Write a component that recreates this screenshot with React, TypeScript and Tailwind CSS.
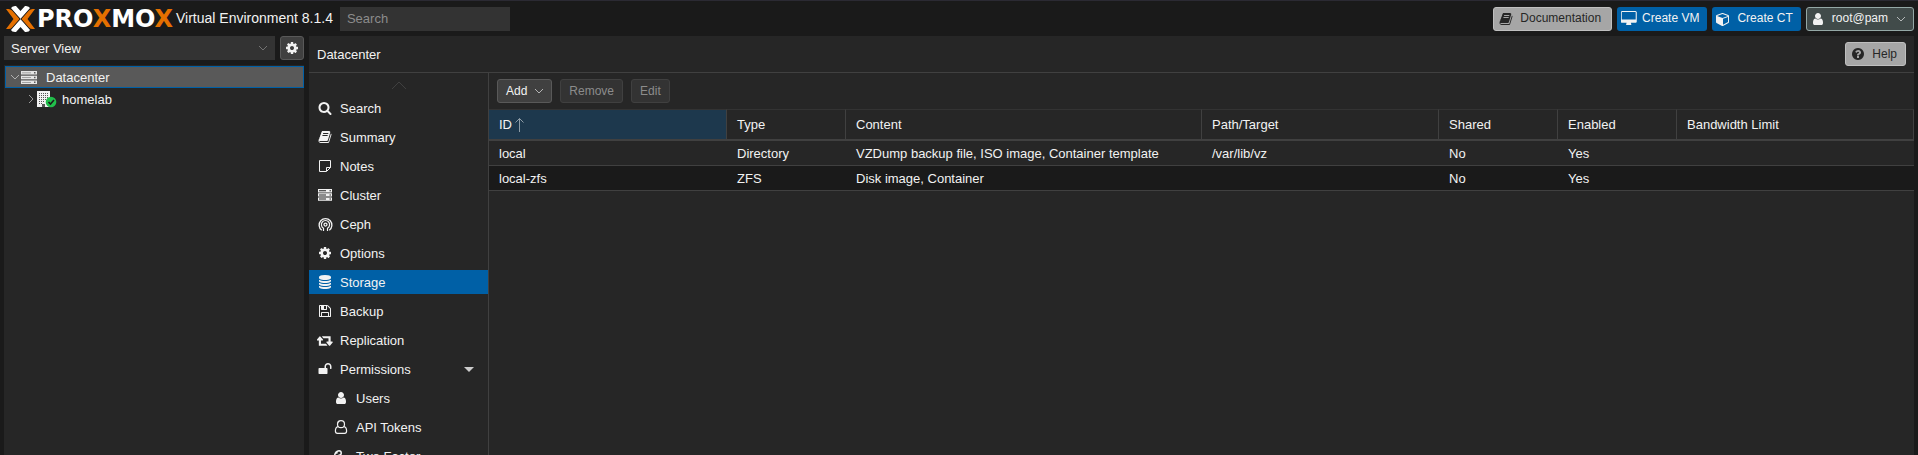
import type { ReactNode } from 'react'

const paths = {
  search:
    'M1216 832q0-185-131.5-316.5t-316.5-131.5-316.5 131.5-131.5 316.5 131.5 316.5 316.5 131.5 316.5-131.5 131.5-316.5zm512 832q0 52-38 90t-90 38q-54 0-90-38l-343-342q-179 124-399 124-143 0-273.5-55.5t-225-150-150-225-55.5-273.5 55.5-273.5 150-225 225-150 273.5-55.5 273.5 55.5 225 150 150 225 55.5 273.5q0 220-124 399l343 343q37 37 37 90z',
  book: 'M1703 478q40 57 18 129l-275 906q-19 64-76.5 107.5t-122.5 43.5h-923q-77 0-148.5-53.5t-99.5-131.5q-24-67-2-127 0-4 3-27t4-37q1-8-3-21.5t-3-19.5q2-11 8-21t16.5-23.5 16.5-23.5q23-38 45-91.5t30-91.5q3-10 .5-30t-.5-28q3-11 17-28t17-23q21-36 42-92t25-90q1-9-2.5-32t.5-28q4-13 22-30.5t22-22.5q19-26 42.5-84.5t27.5-96.5q1-8-3-25.5t-2-26.5q2-8 9-18t18-23 17-21q8-12 16.5-30.5t15-35 16-36 19.5-32 26.5-23.5 36-11.5 47.5 5.5l-1 3q38-9 51-9h761q74 0 114 56t18 130l-274 906q-36 119-71.5 153.5t-128.5 34.5h-869q-27 0-38 15-11 16-1 43 24 70 144 70h923q29 0 56-15.5t35-41.5l300-987q7-22 5-57 38 15 59 43zm-1064 2q-4 13 2 22.5t20 9.5h608q13 0 25.5-9.5t16.5-22.5l21-64q4-13-2-22.5t-20-9.5h-608q-13 0-25.5 9.5t-16.5 22.5zm-83 256q-4 13 2 22.5t20 9.5h608q13 0 25.5-9.5t16.5-22.5l21-64q4-13-2-22.5t-20-9.5h-608q-13 0-25.5 9.5t-16.5 22.5z',
  cog: 'M1152 896q0-106-75-181t-181-75-181 75-75 181 75 181 181 75 181-75 75-181zm512-109v222q0 12-8 23t-20 13l-185 28q-19 54-39 91 35 50 107 138 10 12 10 25t-9 23q-27 37-99 108t-94 71q-12 0-26-9l-138-108q-44 23-91 38-16 136-29 186-7 28-36 28h-222q-14 0-24.5-8.5t-11.5-21.5l-28-184q-49-16-90-37l-141 107q-10 9-25 9-14 0-25-11-126-114-165-168-7-10-7-23 0-12 8-23 15-21 51-66.5t54-70.5q-27-50-41-99l-183-27q-13-2-21-12.5t-8-23.5v-222q0-12 8-23t19-13l186-28q14-46 39-92-40-57-107-138-10-12-10-24 0-10 9-23 26-36 98.5-107.5t94.5-71.5q13 0 26 10l138 107q44-23 91-38 16-136 29-186 7-28 36-28h222q14 0 24.5 8.5t11.5 21.5l28 184q49 16 90 37l142-107q9-9 24-9 13 0 25 10 129 119 165 170 7 8 7 22 0 12-8 23-15 21-51 66.5t-54 70.5q26 50 41 98l183 28q13 2 21 12.5t8 23.5z',
  database:
    'M896 768q237 0 443-43t325-127v170q0 69-103 128t-280 93.5-385 34.5-385-34.5-280-93.5-103-128v-170q119 84 325 127t443 43zm0 768q237 0 443-43t325-127v170q0 69-103 128t-280 93.5-385 34.5-385-34.5-280-93.5-103-128v-170q119 84 325 127t443 43zm0-384q237 0 443-43t325-127v170q0 69-103 128t-280 93.5-385 34.5-385-34.5-280-93.5-103-128v-170q119 84 325 127t443 43zm0-1152q208 0 385 34.5t280 93.5 103 128v128q0 69-103 128t-280 93.5-385 34.5-385-34.5-280-93.5-103-128v-128q0-69 103-128t280-93.5 385-34.5z',
  save: 'M512 1536h768v-384h-768v384zm896 0h128v-896q0-14-10-38.5t-20-34.5l-281-281q-10-10-34-20t-39-10v416q0 40-28 68t-68 28h-576q-40 0-68-28t-28-68v-416h-128v1280h128v-416q0-40 28-68t68-28h832q40 0 68 28t28 68v416zm-384-928v-320q0-13-9.5-22.5t-22.5-9.5h-192q-13 0-22.5 9.5t-9.5 22.5v320q0 13 9.5 22.5t22.5 9.5h192q13 0 22.5-9.5t9.5-22.5zm640 32v928q0 40-28 68t-68 28h-1344q-40 0-68-28t-28-68v-1344q0-40 28-68t68-28h928q40 0 88 20t76 48l280 280q28 28 48 76t20 88z',
  retweet:
    'M1216 1504q0 13-9.5 22.5t-22.5 9.5h-960q-8 0-13.5-2t-9-7-5.5-8-3-11.5-1-11.5v-600h-192q-26 0-45-19t-19-45q0-24 15-41l320-384q19-22 49-22t49 22l320 384q15 17 15 41 0 26-19 45t-45 19h-192v384h576q16 0 25 11l160 192q7 10 7 21zm640-416q0 24-15 41l-320 384q-20 23-49 23t-49-23l-320-384q-15-17-15-41 0-26 19-45t45-19h192v-384h-576q-16 0-25-12l-160-192q-7-9-7-20 0-13 9.5-22.5t22.5-9.5h960q8 0 13.5 2t9 7 5.5 8 3 11.5 1 11.5v600h192q26 0 45 19t19 45z',
  unlock:
    'M1728 576v256q0 26-19 45t-45 19h-64q-26 0-45-19t-19-45v-256q0-106-75-181t-181-75-181 75-75 181v192h96q40 0 68 28t28 68v576q0 40-28 68t-68 28h-960q-40 0-68-28t-28-68v-576q0-40 28-68t68-28h672v-192q0-185 131.5-316.5t316.5-131.5 316.5 131.5 131.5 316.5z',
  user: 'M1536 1399q0 109-62.5 187t-150.5 78h-854q-88 0-150.5-78t-62.5-187q0-85 8.5-160.5t31.5-152 58.5-131 94-89 134.5-34.5q131 128 313 128t313-128q76 0 134.5 34.5t94 89 58.5 131 31.5 152 8.5 160.5zm-256-887q0 159-112.5 271.5t-271.5 112.5-271.5-112.5-112.5-271.5 112.5-271.5 271.5-112.5 271.5 112.5 112.5 271.5z',
  key: 'M832 512q0-80-56-136t-136-56-136 56-56 136q0 42 19 83-41-19-83-19-80 0-136 56t-56 136 56 136 136 56 136-56 56-136q0-42-19-83 41 19 83 19 80 0 136-56t56-136zm851 704q0 17-49 66t-66 49q-9 0-28.5-16t-36.5-33-38.5-40-24.5-26l-96 96 220 220q28 28 28 68 0 42-39 81t-81 39q-40 0-68-28l-671-671q-176 131-365 131-163 0-265.5-102.5t-102.5-265.5q0-160 95-313t248-248 313-95q163 0 265.5 102.5t102.5 265.5q0 189-131 365l355 355 96-96q-3-3-26-24.5t-40-38.5-33-36.5-16-28.5q0-17 49-66t66-49q13 0 23 10 6 6 46 44.5t82 79.5 86.5 86 73 78 28.5 41z',
  desktop:
    'M1728 992v-832q0-13-9.5-22.5t-22.5-9.5h-1600q-13 0-22.5 9.5t-9.5 22.5v832q0 13 9.5 22.5t22.5 9.5h1600q13 0 22.5-9.5t9.5-22.5zm128-832v1088q0 66-47 113t-113 47h-544q0 37 16 77.5t32 71 16 43.5q0 26-19 45t-45 19h-512q-26 0-45-19t-19-45q0-14 16-44t32-70 16-78h-544q-66 0-113-47t-47-113v-1088q0-66 47-113t113-47h1600q66 0 113 47t47 113z',
  cube: 'M896 1629l640-349v-636l-640 233v752zm-64-865l698-254-698-254-698 254zm832-252v768q0 35-18 65t-49 47l-704 384q-28 16-61 16t-61-16l-704-384q-31-17-49-47t-18-65v-768q0-40 23-73t61-47l704-256q22-8 44-8t44 8l704 256q38 14 61 47t23 73z',
  question:
    'M1024 1376v-192q0-14-9-23t-23-9h-192q-14 0-23 9t-9 23v192q0 14 9 23t23 9h192q14 0 23-9t9-23zm256-672q0-88-55.5-163t-138.5-116-170-41q-243 0-371 213-15 24 8 42l132 100q7 6 19 6 16 0 25-12 53-68 86-92 34-24 86-24 48 0 85.5 26t37.5 59q0 38-20 61t-68 45q-63 28-115.5 86.5t-52.5 125.5v36q0 14 9 23t23 9h192q14 0 23-9t9-23q0-19 21.5-49.5t54.5-49.5q32-18 49-28.5t46-35 44.5-48 28-60.5 12.5-81zm384 192q0 209-103 385.5t-279.5 279.5-385.5 103-385.5-103-279.5-279.5-103-385.5 103-385.5 279.5-279.5 385.5-103 385.5 103 279.5 279.5 103 385.5z',
}

const Icon = ({ name, wide = false }: { name: keyof typeof paths; wide?: boolean }) => (
  <svg
    className={wide ? 'h-[15px] w-4 shrink-0' : 'size-[14px] shrink-0'}
    viewBox={wide ? '0 0 1856 1792' : '0 0 1792 1792'}
    fill="currentColor"
    fillRule="evenodd"
  >
    <path d={paths[name]} />
  </svg>
)

const ServerIcon = () => (
  <svg className="h-3 w-[14px] shrink-0" viewBox="0 0 14 12" fill="currentColor">
    <path
      fillRule="evenodd"
      d="M0 0h14v3.400H0zM0 4.200h14v3.400H0zM0 8.400h14v3.400H0zM1 1.200h7v1H1zM11.500 1.200h1.500v1h-1.500zM1 5.400h7v1H1zM11.500 5.400h1.500v1h-1.500zM1 9.600h7v1H1zM11.500 9.600h1.500v1h-1.500z"
    />
  </svg>
)

const DatacenterIcon = () => (
  <svg className="h-[13px] w-4 shrink-0" viewBox="0 0 16 13" fill="#e6e6e6">
    <path d="M0 0h16v3.500H0zM0 4.700h16v3.500H0zM0 9.500h16V13H0z" />
    <path fill="#8c8c8c" d="M1 1.500h9v.8H1zM1 6.200h9V7H1zM1 11h9v.8H1z" />
    <path fill="#595959" d="M13 1h1.500v1.500H13zM13 5.700h1.500v1.500H13zM13 10.500h1.500V12H13z" />
  </svg>
)

const NodeIcon = () => (
  <svg className="h-[18px] w-5 shrink-0" viewBox="0 0 20 18">
    <path fill="#f2f2f2" d="M0 1h13v16H0z" />
    <path
      stroke="#555"
      strokeDasharray="1 1"
      d="M2 3.500h9M2 5.500h9M2 7.500h9M2 9.500h9M2 11.500h5M2 13.500h3"
    />
    <path fill="#555" d="M5 14h3v3H5z" />
    <circle cx="14" cy="12" r="5.300" fill="#21bf4b" />
    <path fill="none" stroke="#1c1c1c" strokeWidth="1.600" d="M11.500 12l2 2 3.500-4" />
  </svg>
)

const NoteIcon = () => (
  <svg className="size-[14px]" viewBox="0 0 14 14" fill="none" stroke="currentColor">
    <path d="M1.5 1.5h11v7l-4 4h-7zM8.500 12V8.500h4" />
  </svg>
)

const CephIcon = () => (
  <svg className="size-[15px]" viewBox="0 0 15 15" fill="none" stroke="currentColor">
    <path strokeWidth="1.300" d="M3.700 13.200a6.400 6.400 0 1 1 7.600 0" />
    <path strokeWidth="1.200" d="M5.500 14v-2.800a4.100 4.100 0 1 1 4 0V14" />
    <circle cx="7.500" cy="7.600" r="1.500" strokeWidth="1.300" />
  </svg>
)

const UserOutlineIcon = () => (
  <svg className="size-[14px]" viewBox="0 0 14 14" fill="none" stroke="currentColor" strokeWidth="1.200">
    <path d="M4.200 6.700C2.100 7 1.400 9 1.400 11c0 1.400.9 2.400 2 2.400h7.200c1.100 0 2-1 2-2.400 0-2-.7-4-2.800-4.300" />
    <circle cx="7" cy="4.200" r="3.500" />
  </svg>
)

const Chevron = ({ className = '' }: { className?: string }) => (
  <svg className={`h-2 w-3 shrink-0 ${className}`} viewBox="0 0 12 8" fill="none" stroke="currentColor">
    <path d="M2 2l4 4 4-4" />
  </svg>
)

const Logo = () => (
  <div className="flex w-[168px] shrink-0 items-center gap-[2px]">
    <svg className="h-[26px] w-[29px] shrink-0" viewBox="0 0 29 26">
      <path fill="#fff" d="M4.500 2.500Q6 0 9 0h1l4.500 5L19 0h1q3 0 4.500 2.500L14.500 13z" />
      <path fill="#fff" d="M4.500 23.500Q6 26 9 26h1l4.500-5 4.500 5h1q3 0 4.500-2.500L14.500 13z" />
      <path fill="#1a1a1a" d="M2 2h3l9.500 11L5 24H2zM27 2h-3l-9.500 11L24 24h3z" />
      <path
        fill="#e57000"
        d="M0 3h2.500q2 0 3.500 1.500L13.500 13 6 21.500Q4.500 23 2.500 23H0l7.500-10zM29 3h-2.500q-2 0-3.500 1.500L15.500 13l7.500 8.500q1.500 1.500 3.500 1.500H29l-7.500-10z"
      />
    </svg>
    <span className="font-['DejaVu_Sans',sans-serif] text-[24px] leading-6 font-bold text-white">
      PRO<span className="text-[#e57000]">X</span>MO<span className="text-[#e57000]">X</span>
    </span>
  </div>
)

type NavItem = { label: string; icon: ReactNode; child?: boolean }

const nav: NavItem[] = [
  { label: 'Search', icon: <Icon name="search" /> },
  { label: 'Summary', icon: <Icon name="book" /> },
  { label: 'Notes', icon: <NoteIcon /> },
  { label: 'Cluster', icon: <ServerIcon /> },
  { label: 'Ceph', icon: <CephIcon /> },
  { label: 'Options', icon: <Icon name="cog" /> },
  { label: 'Storage', icon: <Icon name="database" /> },
  { label: 'Backup', icon: <Icon name="save" /> },
  { label: 'Replication', icon: <Icon name="retweet" wide /> },
  { label: 'Permissions', icon: <Icon name="unlock" /> },
  { label: 'Users', icon: <Icon name="user" />, child: true },
  { label: 'API Tokens', icon: <UserOutlineIcon />, child: true },
  { label: 'Two Factor', icon: <Icon name="key" />, child: true },
]

const columns = ['ID', 'Type', 'Content', 'Path/Target', 'Shared', 'Enabled', 'Bandwidth Limit']

const rows = [
  ['local', 'Directory', 'VZDump backup file, ISO image, Container template', '/var/lib/vz', 'No', 'Yes', ''],
  ['local-zfs', 'ZFS', 'Disk image, Container', '', 'No', 'Yes', ''],
]

const Header = () => (
  <header className="flex h-9 items-center border-t border-[#2b2a33] pr-1 pl-[6px]">
    <Logo />
    <span className="ml-[2px] text-[14px] whitespace-nowrap">Virtual Environment 8.1.4</span>
    <input
      type="text"
      aria-label="Search"
      placeholder="Search"
      className="ml-[7px] h-6 w-[170px] bg-[#333] px-[7px] outline-none placeholder:text-[#8c8c8c]"
    />
    <div className="ml-auto flex gap-[5px] text-[12px] whitespace-nowrap">
      <button className="flex h-6 items-center gap-[7px] rounded-[3px] border border-[#bfbfbf] bg-[#a6a6a6] pr-[10px] pl-[5px] text-[#262626]">
        <Icon name="book" />
        Documentation
      </button>
      <button className="flex h-6 items-center gap-[5px] rounded-[3px] bg-[#0060a6] pr-2 pl-1">
        <Icon name="desktop" wide />
        Create VM
      </button>
      <button className="flex h-6 items-center gap-[7px] rounded-[3px] bg-[#0060a6] pr-2 pl-1">
        <Icon name="cube" />
        Create CT
      </button>
      <button className="flex h-6 items-center gap-[7px] rounded-[3px] border border-[#94a8a6] bg-[#414b4a] pr-[6px] pl-1">
        <Icon name="user" />
        root@pam
        <Chevron className="text-[#b5b9b9]" />
      </button>
    </div>
  </header>
)

const Tree = () => (
  <aside className="flex w-[300px] shrink-0 flex-col">
    <div className="mb-[5px] flex gap-[5px]">
      <button className="flex h-6 flex-1 items-center justify-between bg-[#333] pr-[6px] pl-[7px]">
        Server View
        <Chevron className="text-[#737373]" />
      </button>
      <button
        aria-label="Tree settings"
        className="flex size-6 items-center justify-center rounded-[3px] border border-[#595959] bg-[#404040]"
      >
        <Icon name="cog" />
      </button>
    </div>
    <ul className="flex-1 bg-[#262626] pt-px pl-px">
      <li className="flex h-[22px] items-center border border-[#0060a6] bg-[#595959] pl-[3px]">
        <Chevron className="text-[#b0b0b0]" />
        <DatacenterIcon />
        <span className="ml-[9px]">Datacenter</span>
      </li>
      <li className="flex h-[22px] items-center pl-5">
        <Chevron className="-rotate-90 text-[#999]" />
        <NodeIcon />
        <span className="ml-[5px]">homelab</span>
      </li>
    </ul>
  </aside>
)

const SideNav = () => (
  <nav className="w-[180px] shrink-0 overflow-hidden border-r border-[#404040] pt-2">
    <svg className="mx-auto h-2 w-4 text-[#404040]" viewBox="0 0 16 8" fill="none" stroke="currentColor">
      <path d="M1 8l7-7 7 7" />
    </svg>
    <ul className="flex flex-col gap-[5px] pt-[7px]">
      {nav.map(({ label, icon, child }) => (
        <li key={label}>
          <a
            href="#"
            className={`flex h-6 items-center ${child ? 'pl-6' : 'pl-2'} ${label === 'Storage' ? 'bg-[#0060a6]' : ''}`}
          >
            <span className="flex w-4 justify-center">{icon}</span>
            <span className="ml-[7px]">{label}</span>
            {label === 'Permissions' && (
              <svg className="mr-[14px] ml-auto h-[5px] w-[10px]" viewBox="0 0 10 5" fill="#ccc">
                <path d="M0 0h10L5 5z" />
              </svg>
            )}
          </a>
        </li>
      ))}
    </ul>
  </nav>
)

const StorageTable = () => (
  <table className="w-full table-fixed border-separate border-spacing-0 text-left">
    <colgroup>
      <col className="w-[238px]" />
      <col className="w-[119px]" />
      <col className="w-[356px]" />
      <col className="w-[237px]" />
      <col className="w-[119px]" />
      <col className="w-[119px]" />
      <col />
    </colgroup>
    <thead>
      <tr className="h-8">
        {columns.map((column) => (
          <th
            key={column}
            className={`border-t border-r border-b-2 border-t-[#333] border-r-[#404040] border-b-[#404040] px-[10px] font-normal ${column === 'ID' ? 'bg-[#1d384d]' : ''}`}
          >
            <span className="flex items-center gap-[3px]">
              {column}
              {column === 'ID' && (
                <svg className="h-4 w-[10px] text-[#8e9ca6]" viewBox="0 0 10 16" fill="none" stroke="currentColor">
                  <path d="M4.500 15V1.500M.5 5.500l4-4 4 4" />
                </svg>
              )}
            </span>
          </th>
        ))}
      </tr>
    </thead>
    <tbody>
      {rows.map((row) => (
        <tr key={row[0]} className="h-[25px] even:bg-[#1a1a1a]">
          {row.map((cell, i) => (
            <td key={columns[i]} className="truncate border-b border-[#404040] px-[10px]">
              {cell}
            </td>
          ))}
        </tr>
      ))}
    </tbody>
  </table>
)

const Content = () => (
  <main className="flex min-w-0 flex-1 flex-col bg-[#262626]">
    <div className="flex h-[37px] shrink-0 items-center justify-between border-b border-[#404040] px-2">
      <h1>Datacenter</h1>
      <button className="flex h-6 items-center gap-[7px] rounded-[3px] border border-[#bfbfbf] bg-[#a6a6a6] pr-2 pl-[5px] text-[12px] text-[#262626]">
        <Icon name="question" />
        Help
      </button>
    </div>
    <div className="flex min-h-0 flex-1">
      <SideNav />
      <section className="min-w-0 flex-1">
        <div className="flex gap-2 px-2 py-[6px] text-[12px]">
          <button className="flex h-6 items-center gap-[6px] rounded-[3px] border border-[#595959] bg-[#404040] pr-[6px] pl-2">
            Add
            <Chevron className="text-[#b3b3b3]" />
          </button>
          <button disabled className="h-6 rounded-[3px] border border-[#404040] bg-[#333] px-2 text-[#8c8c8c]">
            Remove
          </button>
          <button disabled className="h-6 rounded-[3px] border border-[#404040] bg-[#333] px-2 text-[#8c8c8c]">
            Edit
          </button>
        </div>
        <StorageTable />
      </section>
    </div>
  </main>
)

export default function App() {
  return (
    <div className="flex h-screen flex-col overflow-hidden bg-[#1a1a1a] font-['Liberation_Sans',Arial,sans-serif] text-[13px] leading-[17px] text-[#f2f2f2]">
      <Header />
      <div className="flex min-h-0 flex-1 gap-[5px] px-1">
        <Tree />
        <Content />
      </div>
    </div>
  )
}
